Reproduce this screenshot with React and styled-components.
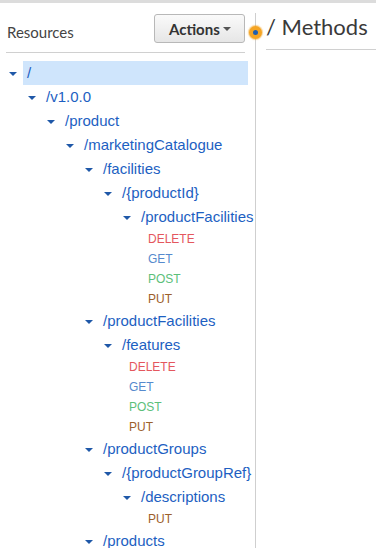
import React from 'react';
import styled, { createGlobalStyle } from 'styled-components';

const GlobalStyle = createGlobalStyle`
  html, body {
    margin: 0;
    padding: 0;
    background: #fff;
    overflow: hidden;
  }
  body {
    font-family: "Liberation Sans", Arial, sans-serif;
  }
`;

const TopStrip = styled.div`
  height: 3px;
  background: #dcdcdc;
`;

const Main = styled.div`
  display: flex;
  height: 545px;
`;

const LeftPanel = styled.div`
  width: 243px;
  padding-left: 6px;
  margin-right: 6px;
  flex-shrink: 0;
`;

const PanelHeader = styled.div`
  display: flex;
  justify-content: space-between;
  align-items: flex-end;
  margin-right: 4px;
  padding-top: 11px;
  padding-bottom: 9px;
  border-bottom: 1px solid #d0d0d0;
`;

const PanelTitle = styled.div`
  font-family: Lato, "Open Sans", sans-serif;
  font-size: 15px;
  line-height: 18px;
  color: #444;
  margin-left: 1px;
  margin-bottom: 2px;
`;

const ActionsButton = styled.button`
  display: flex;
  align-items: center;
  gap: 3px;
  height: 29px;
  width: 91px;
  padding: 0 0 0 14px;
  border: 1px solid #b8b8b8;
  border-radius: 3px;
  background: linear-gradient(#fafafa, #e6e6e6);
  font-family: Lato, "Open Sans", sans-serif;
  font-weight: 700;
  font-size: 15px;
  color: #333;
  cursor: pointer;
`;

const Caret = styled.span`
  width: 0;
  height: 0;
  border-left: 4px solid transparent;
  border-right: 4px solid transparent;
  border-top: 4px solid ${p => p.color || '#444'};
  margin-top: 1px;
`;

const Tree = styled.ul`
  list-style: none;
  margin: 0;
  padding: 8px 1px 0 0;
`;

const ResourceRow = styled.li`
  display: flex;
  align-items: center;
  height: 24px;
  padding-left: ${p => 3 + p.level * 19}px;
`;

const Toggle = styled.span`
  display: flex;
  align-items: center;
  width: 14px;
  flex-shrink: 0;
`;

const Label = styled.span`
  flex: 1;
  height: 24px;
  line-height: 24px;
  padding-left: 4px;
  font-size: 15px;
  color: #1d5fc2;
  white-space: nowrap;
  background: ${p => (p.selected ? '#cfe5fc' : 'transparent')};
`;

const METHOD_COLORS = {
  DELETE: '#e4575e',
  GET: '#568acd',
  POST: '#5cc07a',
  PUT: '#9c602b',
};

const MethodRow = styled.li`
  height: 20px;
  line-height: 20px;
  padding-left: ${p => 9 + p.level * 19}px;
  font-size: 12px;
  color: ${p => METHOD_COLORS[p.method]};
`;

const Divider = styled.div`
  position: relative;
  width: 1px;
  margin-top: 10px;
  background: #cfcfcf;
  flex-shrink: 0;
`;

const Handle = styled.span`
  position: absolute;
  left: -6px;
  top: 13px;
  width: 5px;
  height: 5px;
  border-radius: 50%;
  background: #1f5fb0;
  border: 4px solid #f5a524;
  box-shadow: 0 0 1px 1px rgba(245, 165, 36, 0.5);
`;

const RightPanel = styled.div`
  flex: 1;
  min-width: 0;
  padding-left: 10px;
  padding-top: 10px;
`;

const MethodsTitle = styled.h2`
  margin: 0;
  padding-bottom: 9px;
  border-bottom: 1px solid #d0d0d0;
  font-family: Lato, "Open Sans", sans-serif;
  font-weight: 400;
  font-size: 22px;
  line-height: 27px;
  color: #3a3a3a;
  white-space: nowrap;
`;

const tree = [
  { path: '/', level: 0, selected: true },
  { path: '/v1.0.0', level: 1 },
  { path: '/product', level: 2 },
  { path: '/marketingCatalogue', level: 3 },
  { path: '/facilities', level: 4 },
  { path: '/{productId}', level: 5 },
  { path: '/productFacilities', level: 6, methods: ['DELETE', 'GET', 'POST', 'PUT'] },
  { path: '/productFacilities', level: 4 },
  { path: '/features', level: 5, methods: ['DELETE', 'GET', 'POST', 'PUT'] },
  { path: '/productGroups', level: 4 },
  { path: '/{productGroupRef}', level: 5 },
  { path: '/descriptions', level: 6, methods: ['PUT'] },
  { path: '/products', level: 4 },
];

export default function App() {
  return (
    <>
      <GlobalStyle />
      <TopStrip />
      <Main>
        <LeftPanel>
          <PanelHeader>
            <PanelTitle>Resources</PanelTitle>
            <ActionsButton>
              Actions
              <Caret color="#555" />
            </ActionsButton>
          </PanelHeader>
          <Tree>
            {tree.map((node, i) => (
              <React.Fragment key={i}>
                <ResourceRow level={node.level}>
                  <Toggle>
                    <Caret color="#1f58a8" />
                  </Toggle>
                  <Label selected={node.selected}>{node.path}</Label>
                </ResourceRow>
                {node.methods &&
                  node.methods.map(m => (
                    <MethodRow key={m} level={node.level + 1} method={m}>
                      {m}
                    </MethodRow>
                  ))}
              </React.Fragment>
            ))}
          </Tree>
        </LeftPanel>
        <Divider>
          <Handle />
        </Divider>
        <RightPanel>
          <MethodsTitle>/ Methods</MethodsTitle>
        </RightPanel>
      </Main>
    </>
  );
}
